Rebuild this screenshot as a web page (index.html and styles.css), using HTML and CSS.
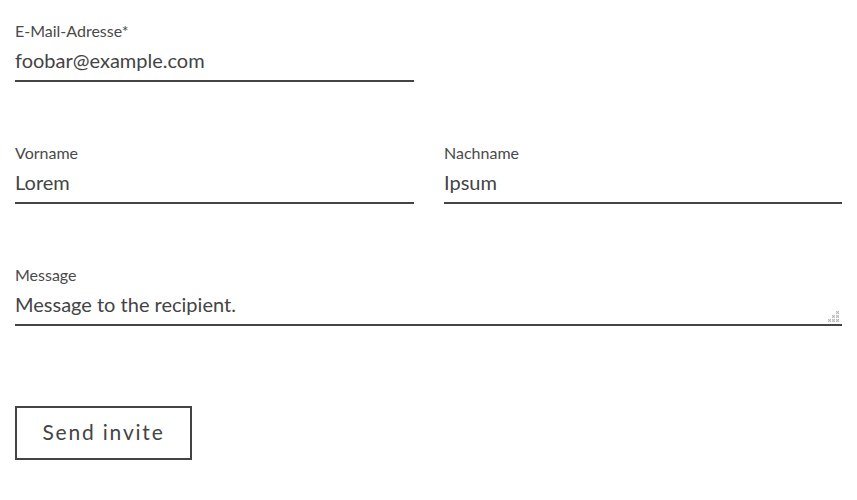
FILE: index.html
```html
<!DOCTYPE html>
<html>
<head>
<meta charset="utf-8">
<link rel="stylesheet" href="styles.css">
</head>
<body>
<form class="form">
  <div class="row">
    <div class="field field-first">
      <label class="label">E-Mail-Adresse*</label>
      <input class="input" type="text" value="foobar@example.com">
    </div>
  </div>
  <div class="row">
    <div class="field">
      <label class="label">Vorname</label>
      <input class="input" type="text" value="Lorem">
    </div>
    <div class="field">
      <label class="label">Nachname</label>
      <input class="input" type="text" value="Ipsum">
    </div>
  </div>
  <div class="row row-full">
    <div class="field">
      <label class="label">Message</label>
      <div class="textarea-wrap">
        <textarea class="input textarea" rows="1">Message to the recipient.</textarea>
        <svg class="grip" width="12" height="12" viewBox="0 0 12 12">
          <defs>
            <pattern id="dots" width="2" height="2" patternUnits="userSpaceOnUse">
              <rect width="2" height="2" fill="#dcdcdc"/>
              <rect width="1" height="1" fill="#b8b8b8"/>
              <rect x="1" y="1" width="1" height="1" fill="#b8b8b8"/>
            </pattern>
          </defs>
          <rect x="0" y="8" width="3" height="3" fill="url(#dots)"/>
          <rect x="4" y="4" width="3" height="3" fill="url(#dots)"/>
          <rect x="4" y="8" width="3" height="3" fill="url(#dots)"/>
          <rect x="8" y="0" width="3" height="3" fill="url(#dots)"/>
          <rect x="8" y="4" width="3" height="3" fill="url(#dots)"/>
          <rect x="8" y="8" width="3" height="3" fill="url(#dots)"/>
        </svg>
      </div>
    </div>
  </div>
  <div class="actions">
    <button class="button" type="button">Send invite</button>
  </div>
</form>
</body>
</html>
```

FILE: styles.css
```css
html, body {
  margin: 0;
  padding: 0;
  background: #ffffff;
}

body {
  font-family: Lato, "Open Sans", sans-serif;
  color: #444444;
}

.form {
  padding: 23px 15px 0 15px;
  width: 827px;
}

.row {
  display: grid;
  grid-template-columns: 399px 398px;
  column-gap: 30px;
  margin-bottom: 63px;
}

.row-full {
  grid-template-columns: 1fr;
  margin-bottom: 0;
}

.field {
  display: flex;
  flex-direction: column;
}

.label {
  font-size: 16px;
  line-height: 16px;
  color: #4a4a4a;
}

.input {
  font-family: inherit;
  font-size: 20px;
  line-height: 28px;
  color: #444444;
  border: none;
  border-bottom: 2px solid #444444;
  padding: 7px 0 6px 0;
  margin: 0;
  outline: none;
  background: transparent;
}

.textarea-wrap {
  position: relative;
}

.textarea {
  resize: none;
  height: 43px;
  box-sizing: border-box;
  width: 100%;
  overflow: hidden;
  display: block;
}

.grip {
  position: absolute;
  right: 2px;
  bottom: 3px;
  display: block;
}

.actions {
  margin-top: 80px;
}

.button {
  font-family: inherit;
  font-size: 21px;
  letter-spacing: 1.8px;
  color: #444444;
  background: #ffffff;
  border: 2px solid #444444;
  width: 177px;
  height: 54px;
  padding: 0 0 3px 0;
}
```
